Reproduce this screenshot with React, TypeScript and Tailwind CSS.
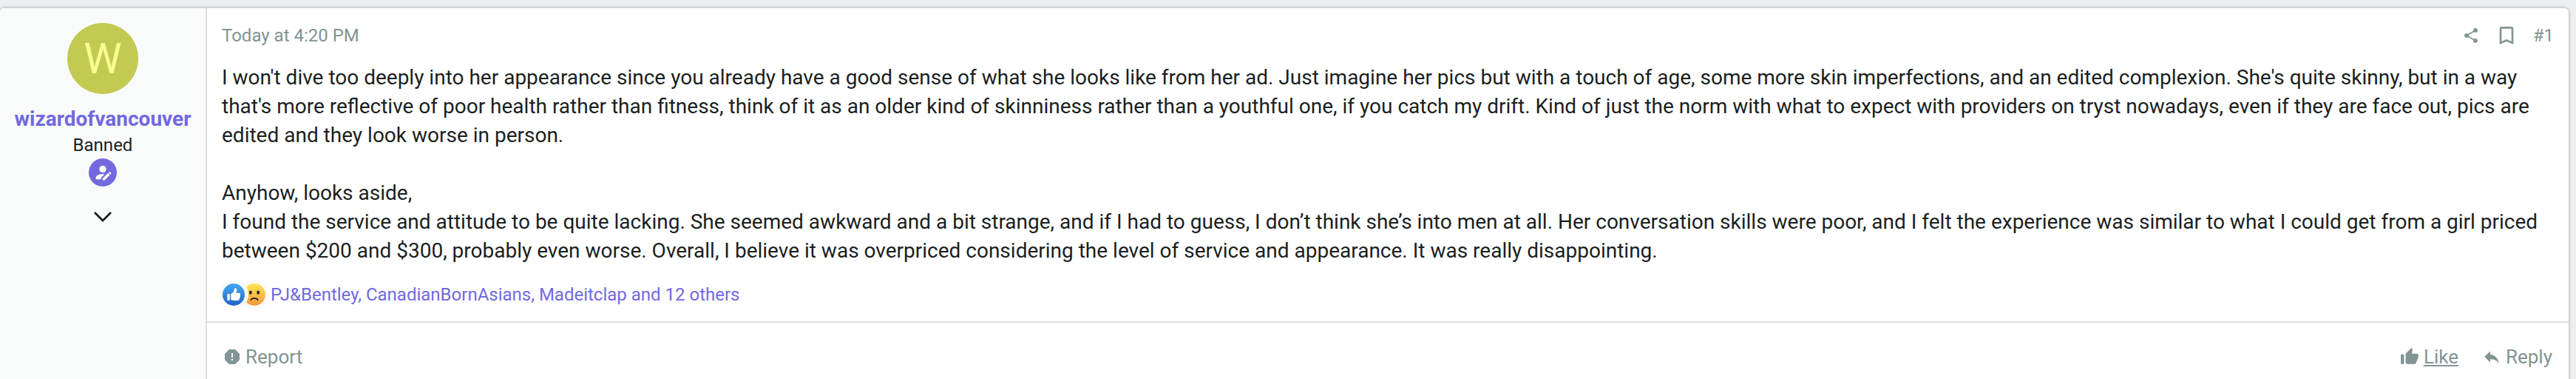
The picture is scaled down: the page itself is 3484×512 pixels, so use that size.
import { FC, ReactNode } from "react";

import {
  MdBookmarkBorder,
  MdReply,
  MdShare,
  MdThumbUp,
} from "react-icons/md";

const UserEditIcon: FC = () => (
  <svg viewBox="0 0 24 24" className="size-7" fill="currentColor">
    <path d="M21.7 13.35l-1 1-2.05-2.05 1-1a.55.55 0 0 1 .77 0l1.28 1.28c.21.21.21.56 0 .77M12 18.94l6.06-6.06 2.05 2.05L14.06 21H12v-2.06M12 14c-4.42 0-8 1.79-8 4v2h6v-1.89l4-4c-.66-.08-1.33-.11-2-.11m0-10a4 4 0 0 0 0 8 4 4 0 0 0 0-8z" />
  </svg>
);

const ReportIcon: FC = () => (
  <svg viewBox="0 0 24 24" className="size-6" fill="currentColor">
    <path d="M13 13h-2V7h2v6m0 4h-2v-2h2v2M8 2L2 8v8l6 6h8l6-6V8l-6-6H8z" />
  </svg>
);

const LikeReaction: FC = () => (
  <svg viewBox="0 0 32 32" className="size-full">
    <defs>
      <linearGradient id="like" x1="0" y1="0" x2="0" y2="1">
        <stop offset="0" stopColor="#45aaf0" />
        <stop offset="1" stopColor="#2463c9" />
      </linearGradient>
    </defs>
    <circle cx="16" cy="16" r="16" fill="url(#like)" />
    <path
      fill="#fff"
      d="M6.8 15.2h3.7v9H6.800zM12 15c2.800-1.400 4.600-3.600 5-7 .2-2.300 3.500-1.700 3.600 1.200 0 1.600-.5 3.100-1 4.500h4c2.200 0 2.800 2 1.600 3.100.9 1 .7 2.100-.4 2.800.6 1.100.2 2.100-.8 2.600.3 1.500-.6 2.300-2 2.300h-5c-2 0-3.400-.6-5-1.200z"
    />
  </svg>
);

const SadReaction: FC = () => (
  <svg viewBox="0 0 32 32" className="size-full">
    <defs>
      <linearGradient id="sad" x1="0" y1="0" x2="0" y2="1">
        <stop offset="0" stopColor="#fde756" />
        <stop offset="1" stopColor="#f6963f" />
      </linearGradient>
    </defs>
    <circle cx="16" cy="16" r="16" fill="url(#sad)" />
    <ellipse cx="10.500" cy="12.800" rx="2" ry="2.800" fill="#1c1c1c" />
    <ellipse cx="21.500" cy="12.800" rx="2" ry="2.800" fill="#1c1c1c" />
    <path
      d="M11 23.500c2-3 8-3 10 0"
      fill="none"
      stroke="#1c1c1c"
      strokeWidth="1.800"
      strokeLinecap="round"
    />
  </svg>
);

type ActionProps = {
  icon: ReactNode;
  label: string;
  underline?: boolean;
};

const Action: FC<ActionProps> = ({ icon, label, underline }) => (
  <button type="button" className="flex items-center gap-1.5">
    {icon}
    <span
      className={underline ? "underline decoration-2 underline-offset-2" : ""}
    >
      {label}
    </span>
  </button>
);

const UserPanel: FC = () => (
  <aside className="flex w-[280px] shrink-0 flex-col items-center rounded-tl-md border-r-2 border-[#dedede] bg-[#f9fbfa] pt-5">
    <a
      href="#avatar"
      className="flex size-24 items-center justify-center rounded-full bg-[#c2ca52] text-[58px] leading-none text-[#f9ff91]"
    >
      W
    </a>
    <h4 className="mt-3.5 text-[28px] leading-[39px] font-bold text-[#7269df]">
      <a href="#member">wizardofvancouver</a>
    </h4>
    <p className="text-2xl leading-8">Banned</p>
    <span className="mt-0.5 flex size-[38px] items-center justify-center rounded-full bg-[#7269df] text-white">
      <UserEditIcon />
    </span>
    <button type="button" aria-label="Show more" className="mt-7">
      <svg viewBox="0 0 24 24" className="size-6" fill="none">
        <path d="M1 7l11 11L23 7" stroke="currentColor" strokeWidth="2.800" />
      </svg>
    </button>
  </aside>
);

export default function App() {
  return (
    <div className="min-h-screen overflow-hidden bg-[#edeef0] pt-[11px] pr-2.5 font-[Roboto,sans-serif] text-[#1b1f1f]">
      <article className="flex min-h-[520px] rounded-md bg-white shadow-[0_0_4px_rgba(0,0,0,0.35)]">
        <UserPanel />
        <div className="flex min-w-0 grow flex-col">
          <header className="flex items-center justify-between px-5 pt-5 text-2xl leading-[34px] text-[#829493]">
            <a href="#date">
              <time>Today at 4:20 PM</time>
            </a>
            <div className="flex items-center gap-5">
              <a href="#share" aria-label="Share">
                <MdShare className="size-6" />
              </a>
              <a href="#bookmark" aria-label="Bookmark">
                <MdBookmarkBorder className="size-8" />
              </a>
              <a href="#post-1">#1</a>
            </div>
          </header>

          <div className="px-5 pt-5 text-[28px] leading-[39px]">
            <p>
              I won't dive too deeply into her appearance since you already have
              a good sense of what she looks like from her ad. Just imagine her
              pics but with a touch of age, some more skin imperfections, and an
              edited complexion. She's quite skinny, but in a way that's more
              reflective of poor health rather than fitness, think of it as an
              older kind of skinniness rather than a youthful one, if you catch
              my drift. Kind of just the norm with what to expect with providers
              on tryst nowadays, even if they are face out, pics are edited and
              they look worse in person.
              <br />
              <br />
              Anyhow, looks aside,
              <br />
              I found the service and attitude to be quite lacking. She seemed
              awkward and a bit strange, and if I had to guess, I don’t think
              she’s into men at all. Her conversation skills were poor, and I
              felt the experience was similar to what I could get from a girl
              priced between $200 and $300, probably even worse. Overall, I
              believe it was overpriced considering the level of service and
              appearance. It was really disappointing.
            </p>
          </div>

          <div className="flex items-center px-4 pt-5 pb-4 text-2xl leading-9 text-[#7269df]">
            <span className="z-10 size-10 rounded-full bg-[#f9fbfa] p-[5px]">
              <LikeReaction />
            </span>
            <span className="-ml-3 size-10 rounded-full bg-[#f9fbfa] p-[5px]">
              <SadReaction />
            </span>
            <a href="#reactions" className="ml-0.5">
              PJ&amp;Bentley, CanadianBornAsians, Madeitclap and 12 others
            </a>
          </div>

          <footer className="flex justify-between border-t-2 border-[#dedede] px-[22px] pt-7 text-[26px] leading-9 text-[#829493]">
            <Action icon={<ReportIcon />} label="Report" />
            <div className="flex gap-8">
              <Action
                icon={<MdThumbUp className="size-[26px]" />}
                label="Like"
                underline
              />
              <Action icon={<MdReply className="size-[26px]" />} label="Reply" />
            </div>
          </footer>
        </div>
      </article>
    </div>
  );
}
